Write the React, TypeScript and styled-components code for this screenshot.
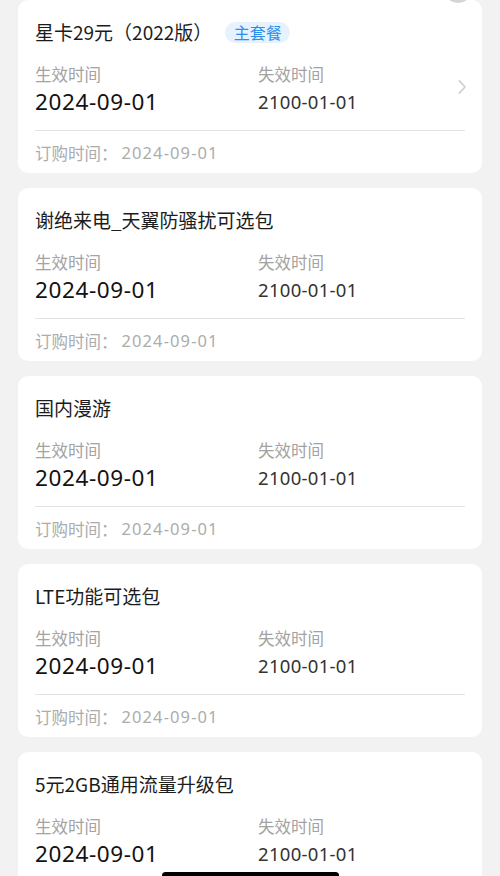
import React from "react";
import styled, { createGlobalStyle } from "styled-components";

const Global = createGlobalStyle`
  html, body { margin: 0; padding: 0; background: #f2f2f2; }
  body { font-family: "Noto Sans CJK SC", "Noto Sans", sans-serif; -webkit-font-smoothing: antialiased; }
  * { box-sizing: border-box; }
`;

const Page = styled.div`
  position: relative;
  width: 500px;
  height: 876px;
  overflow: hidden;
  background: #f2f2f2;
  padding: 0 18px;
  display: flex;
  flex-direction: column;
  gap: 15px;
`;

const Card = styled.div`
  background: #ffffff;
  border-radius: 10px;
  padding: 20px 17px 0 17px;
  height: 173px;
  flex-shrink: 0;
  display: flex;
  flex-direction: column;
`;

const TitleRow = styled.div`
  display: flex;
  align-items: center;
  height: 24px;
  gap: 13px;
`;

const Title = styled.div`
  font-size: 19px;
  line-height: 24px;
  color: #1c1c1c;
  white-space: nowrap;
`;

const Badge = styled.span`
  display: inline-flex;
  align-items: center;
  justify-content: center;
  height: 21px;
  padding: 0 8.5px;
  border-radius: 11px;
  background: #e6f3ff;
  color: #2b8ff0;
  font-size: 16px;
  line-height: 21px;
`;

const InfoRow = styled.div`
  display: flex;
  align-items: center;
  margin-top: 19px;
`;

const Col = styled.div<{ $w?: number }>`
  display: flex;
  flex-direction: column;
  width: ${(p) => (p.$w ? `${p.$w}px` : "auto")};
  flex: ${(p) => (p.$w ? "none" : "1")};
`;

const Label = styled.div`
  font-size: 16.5px;
  line-height: 22px;
  color: #a3a3a3;
`;

const DateValue = styled.div<{ $big?: boolean }>`
  margin-top: 3px;
  font-family: "Noto Sans", "Noto Sans CJK SC", sans-serif;
  font-size: ${(p) => (p.$big ? "22.5px" : "18.5px")};
  line-height: 28px;
  color: ${(p) => (p.$big ? "#121212" : "#333333")};
  letter-spacing: ${(p) => (p.$big ? "0.6px" : "0.3px")};
`;

const Chevron = styled.svg`
  width: 10px;
  height: 16px;
  margin-right: -2px;
  margin-top: -5px;
  flex: none;
`;

const Divider = styled.div`
  height: 1px;
  background: #e3e3e3;
  margin-top: 14px;
`;

const Footer = styled.div`
  flex: 1;
  display: flex;
  align-items: center;
  font-size: 16.5px;
  color: #acacac;
  padding-top: 1px;
`;

const FooterDate = styled.span`
  margin-left: 4px;
  font-family: "Noto Sans", "Noto Sans CJK SC", sans-serif;
  letter-spacing: 1.1px;
`;

const TopBlob = styled.div`
  position: absolute;
  top: -28px;
  left: 443px;
  width: 30px;
  height: 31px;
  border-radius: 50%;
  background: #d4d4d8;
`;

const HomeBar = styled.div`
  position: absolute;
  left: 162px;
  bottom: -3px;
  width: 177px;
  height: 7px;
  border-radius: 4px;
  background: #000;
`;

type Item = { title: string; badge?: string; chevron?: boolean };

const items: Item[] = [
  { title: "星卡29元（2022版）", badge: "主套餐", chevron: true },
  { title: "谢绝来电_天翼防骚扰可选包" },
  { title: "国内漫游" },
  { title: "LTE功能可选包" },
  { title: "5元2GB通用流量升级包" },
];

export default function App() {
  return (
    <>
      <Global />
      <Page>
        {items.map((it, i) => (
          <Card key={i}>
            <TitleRow>
              <Title>{it.title}</Title>
              {it.badge && <Badge>{it.badge}</Badge>}
            </TitleRow>
            <InfoRow>
              <Col $w={223}>
                <Label>生效时间</Label>
                <DateValue $big>2024-09-01</DateValue>
              </Col>
              <Col>
                <Label>失效时间</Label>
                <DateValue>2100-01-01</DateValue>
              </Col>
              {it.chevron && (
                <Chevron viewBox="0 0 10 16">
                  <path d="M2.5 2 L8 8 L2.5 14" fill="none" stroke="#cfcfcf" strokeWidth="1.8" strokeLinecap="round" strokeLinejoin="round" />
                </Chevron>
              )}
            </InfoRow>
            <Divider />
            <Footer>
              订购时间：<FooterDate>2024-09-01</FooterDate>
            </Footer>
          </Card>
        ))}
        <TopBlob />
        <HomeBar />
      </Page>
    </>
  );
}
